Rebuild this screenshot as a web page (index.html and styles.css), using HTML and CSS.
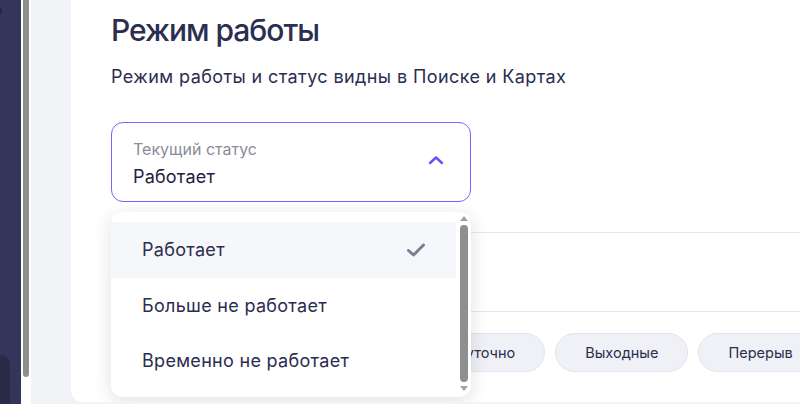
FILE: index.html
```html
<!DOCTYPE html>
<html lang="ru">
<head>
<meta charset="utf-8">
<title>Режим работы</title>
<link rel="stylesheet" href="styles.css">
</head>
<body>
<div class="app">
  <aside class="sidebar">
    <div class="sidebar-mark"></div>
    <div class="sidebar-block"></div>
  </aside>
  <div class="page-scroll"><div class="page-thumb"></div></div>
  <div class="gutter"></div>
  <main class="card">
    <h1 class="title">Режим работы</h1>
    <p class="subtitle">Режим работы и статус видны в Поиске и Картах</p>
    <div class="select-wrap">
      <div class="select">
        <div class="select-text">
          <span class="select-label">Текущий статус</span>
          <span class="select-value">Работает</span>
        </div>
        <svg class="chevron" width="16" height="10" viewBox="0 0 16 10"><path d="M2 8 L8 2.5 L14 8" fill="none" stroke="#6b4fff" stroke-width="2.4" stroke-linecap="round" stroke-linejoin="round"/></svg>
      </div>
      <div class="dropdown">
        <ul class="options">
          <li class="option selected">Работает
            <svg class="check" width="20" height="16" viewBox="0 0 20 16"><path d="M2.5 8.5 L7.5 13 L17.5 3" fill="none" stroke="#7c7e90" stroke-width="3" stroke-linecap="round" stroke-linejoin="round"/></svg>
          </li>
          <li class="option">Больше не работает</li>
          <li class="option">Временно не работает</li>
        </ul>
        <div class="dd-scroll">
          <div class="arrow up"></div>
          <div class="dd-thumb"></div>
          <div class="arrow down"></div>
        </div>
      </div>
    </div>
    <div class="row"></div>
    <div class="pills">
      <span class="pill">Круглосуточно</span>
      <span class="pill">Выходные</span>
      <span class="pill">Перерыв</span>
    </div>
  </main>
</div>
</body>
</html>
```
FILE: styles.css
```css
* { box-sizing: border-box; }
html, body { margin: 0; padding: 0; }
body {
  width: 800px;
  height: 404px;
  overflow: hidden;
  background: #f2f3f7;
  font-family: "Inter", "Roboto", "Noto Sans", sans-serif;
  color: #2b2d4f;
}
.app {
  display: flex;
  height: 404px;
}
.sidebar {
  width: 21px;
  flex: none;
  background: #33355a;
  display: flex;
  flex-direction: column;
  justify-content: space-between;
}
.sidebar-mark {
  width: 2px;
  height: 6px;
  margin-top: 8px;
  background: #26283f;
}
.sidebar-block {
  width: 10px;
  height: 49px;
  background: #292a46;
  border-top-right-radius: 10px;
}
.page-scroll {
  width: 10px;
  flex: none;
  background: #ffffff;
  padding: 0 2px;
}
.page-thumb {
  width: 6px;
  height: 377px;
  background: #8f8f8f;
  border-radius: 0 0 3px 3px;
}
.gutter {
  width: 40px;
  flex: none;
  background: #f2f3f7;
}
.card {
  flex: 1;
  height: 402px;
  background: #ffffff;
  border-bottom-left-radius: 12px;
  padding: 12px 0 0 40px;
  display: flex;
  flex-direction: column;
  min-width: 0;
  overflow: hidden;
}
.title {
  margin: 0;
  font-size: 30px;
  line-height: 36px;
  font-weight: 500;
  color: #2c2e51;
  letter-spacing: -1px;
}
.subtitle {
  margin: 17px 0 0;
  font-size: 18px;
  line-height: 24px;
  color: #2b2d4f;
  letter-spacing: 0.4px;
}
.select-wrap {
  position: relative;
  width: 360px;
  margin-top: 33px;
}
.select {
  height: 80px;
  border: 1px solid #7d63ff;
  border-radius: 12px;
  display: flex;
  align-items: center;
  justify-content: space-between;
  padding: 0 26px 0 21px;
}
.select-text {
  display: flex;
  flex-direction: column;
  padding-top: 3px;
}
.select-label {
  font-size: 16px;
  line-height: 20px;
  color: #8b8b99;
}
.select-value {
  margin-top: 6px;
  font-size: 18px;
  line-height: 24px;
  color: #1f2140;
  letter-spacing: 0.2px;
}
.chevron { margin-top: -4px; }
.dropdown {
  position: absolute;
  left: 0;
  top: 90px;
  width: 360px;
  height: 185px;
  background: #ffffff;
  border-radius: 12px;
  box-shadow: 0 4px 18px rgba(30, 32, 60, 0.14);
  display: flex;
  z-index: 2;
  overflow: hidden;
}
.options {
  list-style: none;
  margin: 0;
  padding: 10px 0 0;
  flex: 1;
}
.option {
  height: 55.5px;
  display: flex;
  align-items: center;
  justify-content: space-between;
  padding: 0 30px 0 31px;
  font-size: 18px;
  color: #2b2d4f;
  letter-spacing: 0.3px;
}
.option.selected { background: #f6f7fa; }
.dd-scroll {
  width: 15px;
  flex: none;
  display: flex;
  flex-direction: column;
  align-items: center;
  padding: 4px 0 6px;
  gap: 4px;
}
.arrow {
  width: 0;
  height: 0;
  border-left: 4px solid transparent;
  border-right: 4px solid transparent;
}
.arrow.up { border-bottom: 5px solid #a3a3a3; }
.arrow.down { border-top: 5px solid #a3a3a3; }
.dd-thumb {
  flex: 1;
  width: 8px;
  background: #8f8f8f;
  border-radius: 4px;
}
.row {
  margin-top: 30px;
  height: 80px;
  border-top: 1px solid #e6e6ef;
  border-bottom: 1px solid #e6e6ef;
}
.pills {
  display: flex;
  gap: 10px;
  margin-top: 21px;
  white-space: nowrap;
  padding-left: 267px;
}
.pill {
  flex: none;
  height: 39px;
  display: flex;
  align-items: center;
  padding: 0 29px;
  border-radius: 20px;
  background: #f0f1f6;
  border: 1px solid #e3e4ed;
  font-size: 14.5px;
  color: #2b2d4f;
}
```
